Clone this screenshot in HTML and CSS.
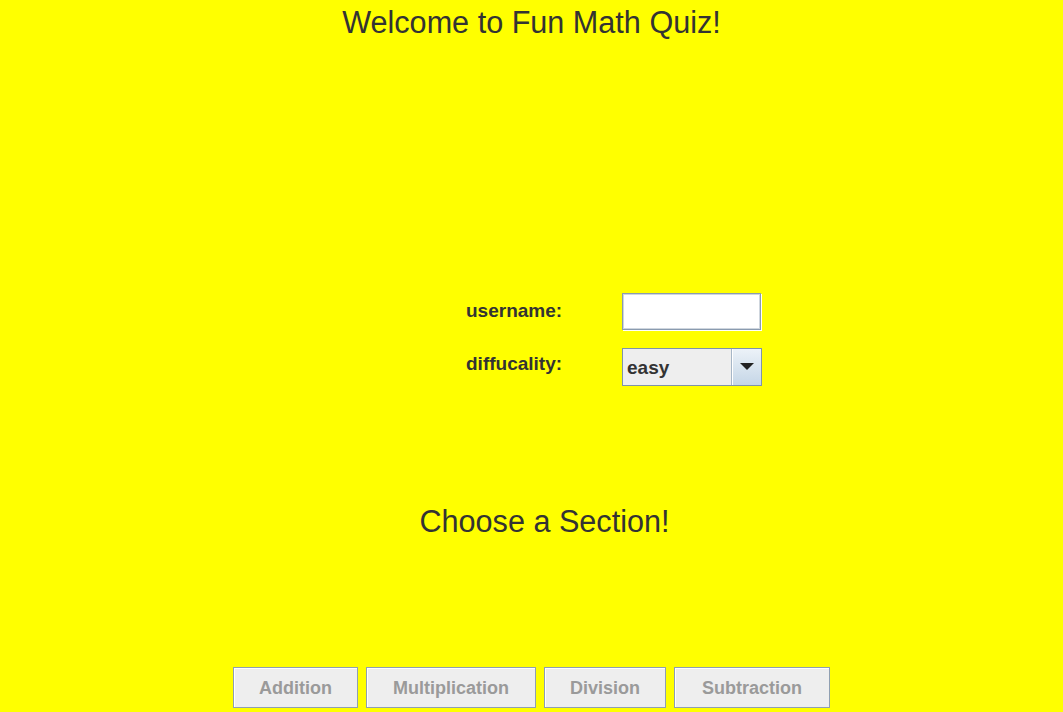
FILE: index.html
```html
<!DOCTYPE html>
<html>
<head>
<meta charset="utf-8">
<link rel="stylesheet" href="styles.css">
</head>
<body>
<div class="page">
  <h1 class="title">Welcome to Fun Math Quiz!</h1>
  <div class="form">
    <div class="row row-user">
      <span class="label">username:</span>
      <span class="field"></span>
    </div>
    <div class="row row-diff">
      <span class="label">diffucality:</span>
      <span class="combo"><span class="combo-value">easy</span><span class="combo-btn"><svg width="14" height="8" viewBox="0 0 14 8"><path d="M0 0H14L7 7Z" fill="#222"/></svg></span></span>
    </div>
  </div>
  <h2 class="section">Choose a Section!</h2>
  <div class="buttons">
    <button class="btn b-add">Addition</button>
    <button class="btn b-mul">Multiplication</button>
    <button class="btn b-div">Division</button>
    <button class="btn b-sub">Subtraction</button>
  </div>
</div>
</body>
</html>
```

FILE: styles.css
```css
html, body {
  margin: 0;
  padding: 0;
  background: #ffff00;
}
.page {
  width: 1063px;
  height: 712px;
  display: flex;
  flex-direction: column;
  font-family: "Liberation Sans", Arial, sans-serif;
  color: #333333;
  overflow: hidden;
}
.title {
  margin: 5px 0 0 0;
  font-size: 30.6px;
  font-weight: normal;
  line-height: 34px;
  text-align: center;
}
.form {
  margin-top: 254px;
  padding-left: 466px;
  display: flex;
  flex-direction: column;
  gap: 18px;
}
.row {
  display: flex;
  align-items: center;
}
.label {
  width: 156px;
  font-size: 19px;
  font-weight: bold;
  line-height: 20px;
}
.row-user .label { position: relative; top: -1px; }
.row-diff .label { position: relative; top: -3px; }
.field {
  width: 137px;
  height: 35px;
  background: #ffffff;
  border: 1px solid #8a9bb0;
  box-shadow: 1px 1px 0 #ffffff;
  outline: 1px solid #cfd6de;
  outline-offset: -2px;
}
.combo {
  width: 138px;
  height: 36px;
  border: 1px solid #7f93aa;
  background: #eeeeee;
  display: flex;
}
.combo-value {
  flex: 1;
  font-size: 19px;
  font-weight: bold;
  line-height: 36px;
  padding-left: 4px;
  padding-top: 1px;
  box-sizing: border-box;
  border-right: 1px solid #a6b6c7;
}
.combo-btn {
  width: 28px;
  display: flex;
  align-items: center;
  justify-content: center;
  background: linear-gradient(#ecf2f8, #c5d6e7);
  border-left: 1px solid #ffffff;
}
.section {
  margin: 118px 0 0 0;
  padding-left: 26px;
  font-size: 30.6px;
  font-weight: normal;
  line-height: 34px;
  text-align: center;
}
.buttons {
  margin-top: 129px;
  display: flex;
  justify-content: center;
  gap: 8px;
}
.btn {
  height: 41px;
  margin: 0;
  padding: 2px 0 0 0;
  background: #eeeeee;
  border: 1px solid #8f9fb2;
  box-shadow: inset 1px 1px 0 #ffffff;
  font-family: "Liberation Sans", Arial, sans-serif;
  font-size: 18px;
  font-weight: bold;
  color: #9a9a9a;
}
.b-add { width: 125px; }
.b-mul { width: 170px; }
.b-div { width: 122px; }
.b-sub { width: 156px; }
```
